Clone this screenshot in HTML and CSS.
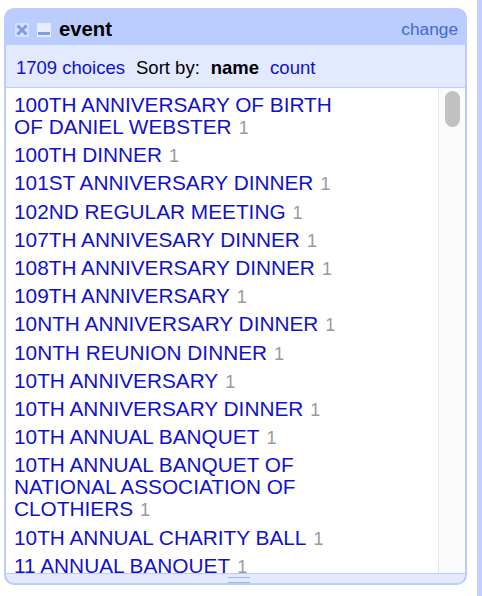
FILE: index.html
```html
<!DOCTYPE html>
<html>
<head>
<meta charset="utf-8">
<link rel="stylesheet" href="styles.css">
</head>
<body>
<div class="facet">
  <div class="facet-title">
    <span class="icon icon-remove"><svg width="14" height="14" viewBox="0 0 14 14"><path d="M3.5 3.5 L10.5 10.5 M10.5 3.5 L3.5 10.5" stroke="#7f9de6" stroke-width="3" stroke-linecap="square"/></svg></span>
    <span class="icon icon-min"><span class="bar"></span></span>
    <span class="facet-name">event</span>
    <a class="facet-change">change</a>
  </div>
  <div class="facet-controls">
    <a class="link">1709 choices</a><span class="sep">Sort by:</span><span class="sep bold">name</span><a class="sep link">count</a>
  </div>
  <div class="facet-body">
    <div class="choices">
      <div class="choice"><div class="choice-inner"><a class="label">100TH ANNIVERSARY OF BIRTH OF DANIEL WEBSTER</a><span class="count">1</span></div></div>
      <div class="choice"><div class="choice-inner"><a class="label">100TH DINNER</a><span class="count">1</span></div></div>
      <div class="choice"><div class="choice-inner"><a class="label">101ST ANNIVERSARY DINNER</a><span class="count">1</span></div></div>
      <div class="choice"><div class="choice-inner"><a class="label">102ND REGULAR MEETING</a><span class="count">1</span></div></div>
      <div class="choice"><div class="choice-inner"><a class="label">107TH ANNIVESARY DINNER</a><span class="count">1</span></div></div>
      <div class="choice"><div class="choice-inner"><a class="label">108TH ANNIVERSARY DINNER</a><span class="count">1</span></div></div>
      <div class="choice"><div class="choice-inner"><a class="label">109TH ANNIVERSARY</a><span class="count">1</span></div></div>
      <div class="choice"><div class="choice-inner"><a class="label">10NTH ANNIVERSARY DINNER</a><span class="count">1</span></div></div>
      <div class="choice"><div class="choice-inner"><a class="label">10NTH REUNION DINNER</a><span class="count">1</span></div></div>
      <div class="choice"><div class="choice-inner"><a class="label">10TH ANNIVERSARY</a><span class="count">1</span></div></div>
      <div class="choice"><div class="choice-inner"><a class="label">10TH ANNIVERSARY DINNER</a><span class="count">1</span></div></div>
      <div class="choice"><div class="choice-inner"><a class="label">10TH ANNUAL BANQUET</a><span class="count">1</span></div></div>
      <div class="choice"><div class="choice-inner"><a class="label">10TH ANNUAL BANQUET OF NATIONAL ASSOCIATION OF CLOTHIERS</a><span class="count">1</span></div></div>
      <div class="choice"><div class="choice-inner"><a class="label">10TH ANNUAL CHARITY BALL</a><span class="count">1</span></div></div>
      <div class="choice"><div class="choice-inner"><a class="label">11 ANNUAL BANQUET</a><span class="count">1</span></div></div>
    </div>
    <div class="scrolltrack"><div class="thumb"></div></div>
  </div>
  <div class="facet-footer"><span class="grip"></span></div>
</div>
<div class="side-strip"></div>
</body>
</html>
```
FILE: styles.css
```css
html, body {
  margin: 0;
  padding: 0;
  background: #ffffff;
}
body {
  display: flex;
  align-items: flex-start;
  font-family: "Liberation Sans", Arial, sans-serif;
  height: 596px;
  overflow: hidden;
}
.facet {
  width: 463px;
  margin: 8px 0 0 4px;
  display: flex;
  flex-direction: column;
}
.side-strip {
  width: 5px;
  height: 596px;
  margin-left: 10px;
  background: #c3d0ff;
}
.facet-title {
  height: 37px;
  box-sizing: border-box;
  background: #bbccff;
  border-radius: 10px 10px 0 0;
  display: flex;
  align-items: center;
  padding: 6px 9px 0 11px;
}
.icon {
  width: 14px;
  height: 14px;
  display: flex;
  flex: none;
}
.icon-remove {
  background: #d6e0ff;
}
.icon-min {
  margin-left: 8px;
  background: #e6ecff;
  position: relative;
}
.icon-min .bar {
  position: absolute;
  left: 1px;
  right: 1px;
  bottom: 2px;
  height: 3px;
  background: #7f9de6;
}
.facet-name {
  margin-left: 8px;
  font-weight: bold;
  font-size: 20.3px;
  color: #000;
}
.facet-change {
  margin-left: auto;
  font-size: 17.3px;
  color: #3f6ad0;
}
.facet-controls {
  height: 43px;
  box-sizing: border-box;
  background: #e3e9ff;
  border-left: 2px solid #bbccff;
  border-right: 2px solid #bbccff;
  border-bottom: 1px solid #bbccff;
  display: flex;
  align-items: center;
  padding: 3px 0 0 10px;
  font-size: 18.5px;
  color: #000;
}
.link {
  color: #1111cc;
}
.sep {
  margin-left: 11px;
}
.bold {
  font-weight: bold;
}
.facet-body {
  height: 485px;
  box-sizing: border-box;
  background: #fff;
  border-left: 2px solid #bbccff;
  border-right: 2px solid #bbccff;
  display: flex;
}
.choices {
  flex: 1;
  overflow: hidden;
  padding: 3px 0 0 8px;
}
.choice {
  padding: 3.1px 0;
}
.choice-inner {
  width: 330px;
  font-size: 20.8px;
  line-height: 22px;
}
.label {
  color: #1111cc;
}
.count {
  margin-left: 7px;
  color: #9a9a9a;
  font-size: 18px;
  line-height: 18px;
}
.scrolltrack {
  width: 27px;
  flex: none;
  background: #fafafa;
  border-left: 1px solid #e6e6e6;
  padding-top: 3px;
  box-sizing: border-box;
}
.thumb {
  width: 15px;
  height: 36px;
  margin-left: 6px;
  background: #c1c1c1;
  border-radius: 8px;
}
.facet-footer {
  height: 12px;
  box-sizing: border-box;
  background: #e3e9ff;
  border: 2px solid #bbccff;
  border-top: 1px solid #bbccff;
  border-radius: 0 0 10px 10px;
  display: flex;
  justify-content: center;
  padding-top: 3px;
}
.grip {
  width: 22px;
  height: 4px;
  margin-left: 6px;
  border-top: 1px solid #9bb3f0;
  border-bottom: 1px solid #9bb3f0;
}
```
